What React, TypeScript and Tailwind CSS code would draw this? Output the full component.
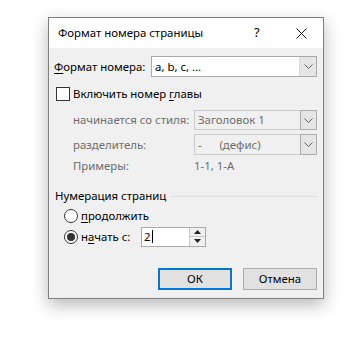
import React from 'react'

const font = { fontFamily: '"Segoe UI", "Noto Sans", sans-serif' }

function Chevron({ color = '#606060' }: { color?: string }) {
  return (
    <svg width="9" height="5" viewBox="0 0 9 5" fill="none">
      <path d="M0.5 0.5 L4.5 4.5 L8.5 0.5" stroke={color} strokeWidth="1" />
    </svg>
  )
}

function Select({ value, width, disabled }: { value: string; width: string; disabled?: boolean }) {
  return (
    <div
      className={`flex h-full ${width} border ${
        disabled ? 'border-[#cccccc] bg-[#f0f0f0] text-[#6d6d6d]' : 'border-[#a9a9a9] bg-white text-black'
      }`}
    >
      <div className="flex flex-1 items-center pl-[3px] whitespace-pre">{value}</div>
      <div
        className={`flex w-[17px] items-center justify-center ${
          disabled ? 'm-[-1px] ml-0 border border-[#adadad] bg-[#e5e5e5]' : 'border-l border-[#dcdcdc] bg-[#e5e5e5]'
        }`}
      >
        <Chevron />
      </div>
    </div>
  )
}

function U({ children }: { children: React.ReactNode }) {
  return <span className="underline underline-offset-2">{children}</span>
}

export default function App() {
  return (
    <div className="min-h-[351px] w-[363px] bg-white pt-[17px] pl-[48px] text-[11.4px] whitespace-nowrap text-black" style={font}>
      <div className="flex h-[282px] w-[276px] flex-col border border-[#7f7f7f] bg-[#f0f0f0] shadow-[0_6px_16px_rgba(0,0,0,0.28)]">
        {/* title bar */}
        <div className="flex h-[30px] shrink-0 items-center bg-white pl-[9px]">
          <span className="flex-1">Формат номера страницы</span>
          <span className="w-[14px] text-[13px]">?</span>
          <div className="mr-[15px] ml-[26px] flex h-[14px] w-[14px] items-center justify-center">
            <svg width="11" height="11" viewBox="0 0 11 11">
              <path d="M0.5 0.5 L10.5 10.5 M10.5 0.5 L0.5 10.5" stroke="#111" strokeWidth="1" />
            </svg>
          </div>
        </div>

        <div className="flex flex-1 flex-col pt-[8px] pr-[6px] pl-[5px]">
          <div className="flex h-[21px] items-center">
            <span className="w-[97px]">
              <U>Ф</U>ормат номера:
            </span>
            <Select value="a, b, c, ..." width="w-[166px]" />
          </div>

          <div className="mt-[10px] flex h-[14px] items-center">
            <div className="ml-[2px] h-[14px] w-[14px] border border-[#333] bg-white" />
            <span className="ml-[3px]">
              Включить номер <U>г</U>лавы
            </span>
          </div>

          <div className="mt-[9px] flex h-[20px] items-center text-[#6d6d6d]">
            <span className="ml-[19px] w-[121px]">начинается со стиля:</span>
            <Select value="Заголовок 1" width="w-[123px]" disabled />
          </div>

          <div className="mt-[4px] flex h-[21px] items-center text-[#6d6d6d]">
            <span className="ml-[19px] w-[121px]">разделитель:</span>
            <Select value={'-      (дефис)'} width="w-[123px]" disabled />
          </div>

          <div className="flex h-[22px] items-center text-[#6d6d6d]">
            <span className="ml-[19px] w-[121px]">Примеры:</span>
            <span>1-1, 1-A</span>
          </div>

          <div className="mt-[9px] flex h-[20px] items-center">
            <span className="ml-[1px]">Нумерация страниц</span>
            <div className="ml-[5px] h-px flex-1 bg-[#dcdcdc]" />
          </div>

          <div className="flex h-[20px] items-center">
            <div className="ml-[10px] h-[14px] w-[14px] rounded-full border border-[#333] bg-white" />
            <span className="ml-[3px]">
              <U>п</U>родолжить
            </span>
          </div>

          <div className="flex h-[21px] items-center">
            <div className="ml-[10px] flex h-[14px] w-[14px] items-center justify-center rounded-full border border-[#333] bg-white">
              <div className="h-[8px] w-[8px] rounded-full bg-[#333]" />
            </div>
            <span className="ml-[3px] w-[60px]">
              н<U>а</U>чать с:
            </span>
            <div className="flex h-[20px] w-[65px] border border-[#a9a9a9] bg-white">
              <div className="flex flex-1 items-center pl-[2px]">
                2<span className="ml-px h-[13px] w-px bg-black" />
              </div>
              <div className="flex w-[16px] flex-col border-l border-[#c8c8c8] bg-[#f0f0f0]">
                <div className="flex flex-1 items-center justify-center border-b border-[#c8c8c8]">
                  <svg width="7" height="4" viewBox="0 0 7 4">
                    <path d="M0 4 L3.5 0 L7 4 Z" fill="#222" />
                  </svg>
                </div>
                <div className="flex flex-1 items-center justify-center">
                  <svg width="7" height="4" viewBox="0 0 7 4">
                    <path d="M0 0 L3.5 4 L7 0 Z" fill="#222" />
                  </svg>
                </div>
              </div>
            </div>
          </div>

          <div className="mt-[21px] flex h-[22px] justify-end gap-[11px]">
            <button className="h-[22px] w-[74px] border-2 border-[#0078d7] bg-[#e1e1e1]">ОК</button>
            <button className="h-[22px] w-[74px] border border-[#adadad] bg-[#e1e1e1]">Отмена</button>
          </div>
        </div>
      </div>
    </div>
  )
}
